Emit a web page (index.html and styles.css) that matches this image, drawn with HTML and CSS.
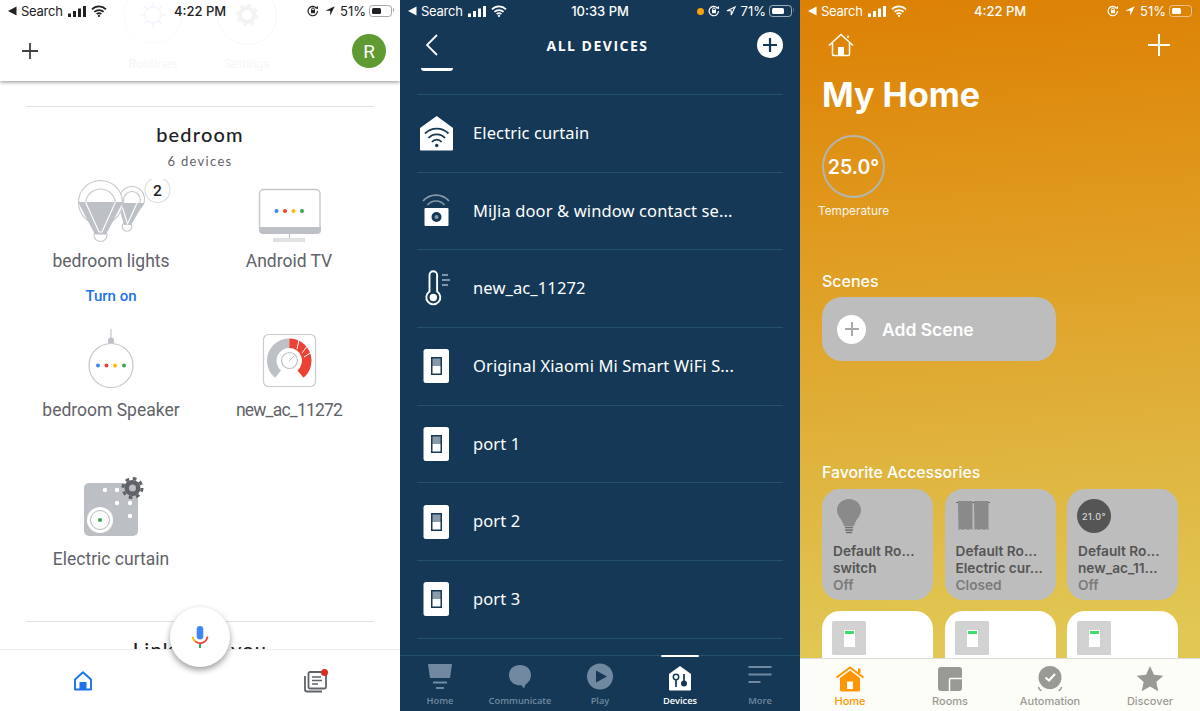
FILE: index.html
```html
<!DOCTYPE html>
<html lang="en">
<head>
    <meta charset="UTF-8">
    <meta name="viewport" content="width=device-width, initial-scale=1.0">
    <title>Smart home apps</title>
    <link rel="stylesheet" href="styles.css">
</head>
<body>
    <!-- shared status bar glyphs -->
    <svg class="sprite" width="0" height="0">
        <symbol id="i-back" viewBox="0 0 9 10"><path d="M0 5 8.500 .5v9z" fill="currentColor"/></symbol>
        <symbol id="i-signal" viewBox="0 0 18 11"><path d="M0 7.500h3V11H0zM5 5h3v6H5zM10 2.500h3V11h-3zM15 0h3v11h-3z" fill="currentColor"/></symbol>
        <symbol id="i-wifi" viewBox="0 0 16 12"><path d="M1 4.300a10 10 0 0 1 14 0M3.400 6.900a6.600 6.600 0 0 1 9.200 0M5.700 9.200a3.300 3.300 0 0 1 4.600 0" fill="none" stroke="currentColor" stroke-width="1.700"/><circle cx="8" cy="10.900" r="1.100" fill="currentColor"/></symbol>
        <symbol id="i-lock" viewBox="0 0 12 12"><path d="M10.500 6a4.700 4.700 0 1 1-1.400-3.300" fill="none" stroke="currentColor" stroke-width="1.200"/><path d="M8 3.200 11 4V1z" fill="currentColor"/><rect x="4" y="5" width="4" height="3.200" fill="currentColor"/><path d="M4.700 5V4.200a1.300 1.300 0 0 1 2.600 0V5" fill="none" stroke="currentColor"/></symbol>
        <symbol id="i-loc" viewBox="0 0 10 10"><path d="M.300 4.800 9.700.300 5.200 9.700V4.800z" fill="currentColor"/></symbol>
        <symbol id="i-loc-line" viewBox="0 0 10 10"><path d="M1 4.800 9 1 5.200 9V4.800z" fill="none" stroke="currentColor" stroke-width="1.100"/></symbol>
        <symbol id="i-switch" viewBox="0 0 40 40"><rect x="6.500" y="3" width="25.500" height="34" rx="2.500" fill="#fff"/><rect x="14" y="11" width="11" height="18" fill="#143855"/><rect x="15.500" y="12.500" width="8" height="7.500" fill="#8a9aa8"/><rect x="15.500" y="20" width="8" height="7.500" fill="#fff"/></symbol>
        <symbol id="i-wall" viewBox="0 0 34 34"><rect width="34" height="34" rx="1.500" fill="#d2d2d2"/><rect x="12" y="9" width="11" height="17" fill="#fff"/><rect x="13" y="10" width="9" height="3" fill="#3fdc6e"/></symbol>
    </svg>

    <div class="screens">
        <!-- Google Home -->
        <section class="phone google">
            <header class="g-top">
                <div class="ghost">
                    <div class="ghost-item">
                        <svg width="60" height="56" viewBox="0 0 60 56"><circle cx="30" cy="14" r="29" fill="none" stroke="#fafafa"/><circle cx="30" cy="15" r="8" fill="none" stroke="#f3f4fc" stroke-width="1.300"/><path d="M30 2v4M30 24v4M17 15h4M39 15h4M21 6l3 3M36 21l3 3M21 24l3-3M36 9l3-3" stroke="#f3f4fc" stroke-width="1.300"/></svg>
                        <span>Routines</span>
                    </div>
                    <div class="ghost-item">
                        <svg width="60" height="56" viewBox="0 0 60 56"><circle cx="30" cy="15" r="29.500" fill="none" stroke="#f7f7f7"/><circle cx="30" cy="15" r="7" fill="none" stroke="#f3f3f3" stroke-width="4"/><circle cx="30" cy="15" r="10" fill="none" stroke="#f3f3f3" stroke-width="2.500" stroke-dasharray="4 3.850"/></svg>
                        <span>Settings</span>
                    </div>
                </div>
                <div class="status">
                    <div class="status-left">
                        <svg class="s-back"><use href="#i-back"/></svg>
                        <span class="s-search">Search</span>
                        <svg class="s-signal"><use href="#i-signal"/></svg>
                        <svg class="s-wifi"><use href="#i-wifi"/></svg>
                    </div>
                    <div class="status-time">4:22 PM</div>
                    <div class="status-right">
                        <svg class="s-lock"><use href="#i-lock"/></svg>
                        <svg class="s-loc"><use href="#i-loc"/></svg>
                        <span>51%</span>
                        <div class="battery"><div class="battery-fill" style="width: 51%"></div></div>
                    </div>
                </div>
                <div class="g-bar">
                    <svg width="16" height="16" viewBox="0 0 16 16"><path d="M8 0v16M0 8h16" stroke="#3c4043" stroke-width="1.800"/></svg>
                    <div class="avatar">R</div>
                </div>
            </header>

            <main class="g-main">
                <hr class="g-rule">
                <h2 class="g-room">bedroom</h2>
                <p class="g-count">6 devices</p>
                <div class="g-grid">
                    <div class="g-cell">
                        <svg class="g-icon" viewBox="22 180 178 64">
                            <circle cx="132" cy="200" r="12.500" fill="#fff" stroke="#c4c7cb" stroke-width="1.100"/>
                            <circle cx="132" cy="201" r="8.500" fill="none" stroke="#c4c7cb" stroke-width="1.100"/>
                            <circle cx="127" cy="227.500" r="4.800" fill="#fff" stroke="#c4c7cb" stroke-width="1.100"/>
                            <path d="M118 204h26l-13 22h-7z" fill="#bdc1c6"/>
                            <path d="M121 204 127.500 225 137 204" fill="none" stroke="#fff" stroke-width="1.100"/>
                            <circle cx="100.500" cy="203.500" r="22" fill="#fff" stroke="#c4c7cb" stroke-width="1.100"/>
                            <circle cx="100.500" cy="205" r="15" fill="none" stroke="#c4c7cb" stroke-width="1.100"/>
                            <circle cx="100.500" cy="236" r="6.500" fill="#fff" stroke="#c4c7cb" stroke-width="1.100"/>
                            <path d="M78 203h45l-17 32.500H95z" fill="#bdc1c6"/>
                            <path d="M85.500 203 99 233h3L115.500 203" fill="none" stroke="#fff" stroke-width="1.100"/>
                            <circle cx="157.500" cy="191" r="12.500" fill="#fff" stroke="#dadce0" stroke-width="1.100"/>
                            <text class="g-badge" x="157.500" y="196.500" text-anchor="middle">2</text>
                        </svg>
                        <div class="g-label">bedroom lights</div>
                        <div class="g-action">Turn on</div>
                    </div>
                    <div class="g-cell">
                        <svg class="g-icon" viewBox="200 180 178 64">
                            <rect x="259.500" y="190.500" width="60.500" height="43.500" rx="4" fill="#fff" stroke="#c4c7cb" stroke-width="1.400"/>
                            <path d="M259 228h62v3a4 4 0 0 1-4 4h-54a4 4 0 0 1-4-4z" fill="#bdc1c6"/>
                            <path d="M289.500 235v5" stroke="#bdc1c6" stroke-width="1.200"/>
                            <rect x="273" y="239" width="32" height="4" fill="#dfe1e3"/>
                            <circle cx="276.500" cy="212" r="2" fill="#4285f4"/>
                            <circle cx="285" cy="212" r="2" fill="#ea4335"/>
                            <circle cx="293.500" cy="212" r="2" fill="#fbbc04"/>
                            <circle cx="302" cy="212" r="2" fill="#34a853"/>
                        </svg>
                        <div class="g-label">Android TV</div>
                    </div>
                    <div class="g-cell">
                        <svg class="g-icon" viewBox="22 329 178 64">
                            <path d="M111 330v11" stroke="#c4c7cb" stroke-width="1.200"/>
                            <path d="M108 345v-3.500a3 3 0 0 1 6 0V345z" fill="#bdc1c6"/>
                            <circle cx="111" cy="366.500" r="22" fill="#fff" stroke="#c4c7cb" stroke-width="1.200"/>
                            <circle cx="98" cy="366.500" r="2" fill="#4285f4"/>
                            <circle cx="106.500" cy="366.500" r="2" fill="#ea4335"/>
                            <circle cx="115" cy="366.500" r="2" fill="#fbbc04"/>
                            <circle cx="124" cy="366.500" r="2" fill="#34a853"/>
                        </svg>
                        <div class="g-label">bedroom Speaker</div>
                    </div>
                    <div class="g-cell">
                        <svg class="g-icon" viewBox="200 329 178 64">
                            <rect x="263.500" y="335.500" width="52" height="52" rx="5" fill="#fff" stroke="#c9cbce" stroke-width="1.200"/>
                            <path d="M278 375.100A17.500 17.500 0 0 1 289.300 344.200" fill="none" stroke="#bdc1c6" stroke-width="9.500"/>
                            <path d="M289.300 344.200A17.500 17.500 0 0 1 300.500 375.100" fill="none" stroke="#ea4335" stroke-width="9.500"/>
                            <path d="M297 350 299 341M302 354 308 346M304 358 312 353" stroke="#fff" stroke-width="1"/>
                            <circle cx="289.500" cy="361.500" r="8" fill="#fff" stroke="#bdc1c6" stroke-width="1.200"/>
                            <path d="M289 362l5-5" stroke="#bdc1c6" stroke-width="1"/>
                        </svg>
                        <div class="g-label g-label-tight">new_ac_11272</div>
                    </div>
                    <div class="g-cell">
                        <svg class="g-icon" viewBox="22 478 178 64">
                            <rect x="84" y="484" width="54" height="53" rx="5" fill="#bcbfc3"/>
                            <g fill="#fff">
                                <circle cx="105" cy="491" r="2.200"/>
                                <circle cx="117" cy="491" r="2.200"/>
                                <circle cx="117" cy="504" r="2.200"/>
                                <circle cx="130" cy="504" r="2.200"/>
                                <circle cx="130" cy="517" r="2.200"/>
                                <circle cx="100" cy="521" r="13"/>
                            </g>
                            <circle cx="100" cy="521" r="9.500" fill="none" stroke="#b5b8bc"/>
                            <circle cx="100" cy="521" r="2" fill="#34a853"/>
                            <circle cx="132.500" cy="489" r="8" fill="#5f6368"/>
                            <circle cx="132.500" cy="489" r="9.500" fill="none" stroke="#5f6368" stroke-width="3" stroke-dasharray="3.700 3.760"/>
                            <circle cx="132.500" cy="489" r="3.500" fill="#bcbfc3"/>
                        </svg>
                        <div class="g-label">Electric curtain</div>
                    </div>
                </div>
                <hr class="g-rule">
                <h2 class="g-linked">Linked to you</h2>
            </main>

            <nav class="g-nav">
                <svg width="18" height="20" viewBox="0 0 18 20"><path d="M1 8.500 9 1.300l8 7.200V18.500H1z" fill="none" stroke="#1a73e8" stroke-width="1.900" stroke-linejoin="round"/><rect x="5.500" y="11" width="7" height="8" fill="#1a73e8"/></svg>
                <svg width="24" height="24" viewBox="0 0 24 24">
                    <path d="M1 7v13.500a2 2 0 0 0 2 2h15" fill="none" stroke="#5f6368" stroke-width="1.800"/>
                    <rect x="4.500" y="3" width="17.500" height="16.500" rx="1.500" fill="none" stroke="#5f6368" stroke-width="1.800"/>
                    <path d="M8 8h9M8 11.500h10M8 15h6" stroke="#5f6368" stroke-width="1.500"/>
                    <circle cx="20.500" cy="3.500" r="3.500" fill="#d93025"/>
                </svg>
            </nav>

            <div class="mic">
                <svg width="18" height="24" viewBox="0 0 18 24">
                    <rect x="5.700" y="1" width="6.600" height="13.500" rx="3.300" fill="#4285f4"/>
                    <path d="M1.500 11.500a7.500 7.500 0 0 0 3 5" fill="none" stroke="#fbbc04" stroke-width="1.800"/>
                    <path d="M4.300 16.400a7.500 7.500 0 0 0 12.200-4.900" fill="none" stroke="#ea4335" stroke-width="1.800"/>
                    <rect x="8" y="19" width="2" height="4" fill="#34a853"/>
                </svg>
            </div>
        </section>

        <!-- Alexa -->
        <section class="phone alexa">
            <div class="status">
                <div class="status-left">
                    <svg class="s-back"><use href="#i-back"/></svg>
                    <span class="s-search">Search</span>
                    <svg class="s-signal"><use href="#i-signal"/></svg>
                    <svg class="s-wifi"><use href="#i-wifi"/></svg>
                </div>
                <div class="status-time">10:33 PM</div>
                <div class="status-right">
                    <span class="dot-orange"></span>
                    <svg class="s-lock"><use href="#i-lock"/></svg>
                    <svg class="s-loc"><use href="#i-loc-line"/></svg>
                    <span>71%</span>
                    <div class="battery"><div class="battery-fill" style="width: 71%"></div></div>
                </div>
            </div>
            <div class="a-head">
                <svg width="13" height="22" viewBox="0 0 13 22"><path d="M12 1 2 11l10 10" fill="none" stroke="#fff" stroke-width="1.800"/></svg>
                <h1 class="a-title">ALL DEVICES</h1>
                <div class="a-add"><svg width="14" height="14" viewBox="0 0 14 14"><path d="M7 0v14M0 7h14" stroke="#143855" stroke-width="2.200"/></svg></div>
            </div>
            <main class="a-list">
                <div class="a-row a-row-cut">
                    <div class="a-cut-bar"></div>
                </div>
                <div class="a-row">
                    <svg class="a-icon" viewBox="0 0 40 40"><path d="M19.700 3 36 15v21.500a1 1 0 0 1-1 1H4a1 1 0 0 1-1-1V15z" fill="#fff"/><path d="M8 20.500a16.500 16.500 0 0 1 23.500 0M11.500 25a11 11 0 0 1 16.500 0M15 29a6 6 0 0 1 9.500 0" fill="none" stroke="#143855" stroke-width="1.800"/><circle cx="19.700" cy="32.500" r="1.700" fill="#143855"/></svg>
                    <span class="a-name">Electric curtain</span>
                </div>
                <div class="a-row">
                    <svg class="a-icon" viewBox="0 0 40 40"><path d="M6 10a17.500 17.500 0 0 1 26 0M10.500 14a11 11 0 0 1 17 0" fill="none" stroke="#8798a8" stroke-width="1.700"/><rect x="7.500" y="17" width="24" height="18" rx="1" fill="#fff"/><circle cx="19.500" cy="26" r="5" fill="#143855"/><circle cx="19.500" cy="26" r="2" fill="#8798a8"/></svg>
                    <span class="a-name">MiJia door &amp; window contact se...</span>
                </div>
                <div class="a-row">
                    <svg class="a-icon" viewBox="0 0 40 40"><path d="M12.500 22.500V6a3.800 3.800 0 0 1 7.600 0v16.500a7 7 0 1 1-7.600 0z" fill="none" stroke="#fff" stroke-width="1.900"/><circle cx="16.300" cy="28.500" r="3.700" fill="#fff"/><path d="M25 6h6M25 11h8M25 16h6" stroke="#a7b4c0" stroke-width="1.500"/></svg>
                    <span class="a-name">new_ac_11272</span>
                </div>
                <div class="a-row">
                    <svg class="a-icon"><use href="#i-switch"/></svg>
                    <span class="a-name">Original Xiaomi Mi Smart WiFi S...</span>
                </div>
                <div class="a-row">
                    <svg class="a-icon"><use href="#i-switch"/></svg>
                    <span class="a-name">port 1</span>
                </div>
                <div class="a-row">
                    <svg class="a-icon"><use href="#i-switch"/></svg>
                    <span class="a-name">port 2</span>
                </div>
                <div class="a-row">
                    <svg class="a-icon"><use href="#i-switch"/></svg>
                    <span class="a-name">port 3</span>
                </div>
            </main>
            <nav class="a-nav">
                <div class="a-tab">
                    <svg width="26" height="28" viewBox="0 0 26 28"><path d="M1 1h24l-2 14H3z" fill="#7089a0"/><path d="M6 19.500h14M9 25h8" stroke="#7089a0" stroke-width="2"/></svg>
                    <span>Home</span>
                </div>
                <div class="a-tab">
                    <svg width="26" height="28" viewBox="0 0 26 28"><path d="M13 2c6.500 0 11 4.200 11 10 0 4.500-2.500 7.500-5.500 9.500L17 25.500l-2.500-3.200C7.500 23 2 18.500 2 12 2 6.200 6.500 2 13 2z" fill="#7089a0"/></svg>
                    <span>Communicate</span>
                </div>
                <div class="a-tab">
                    <svg width="26" height="28" viewBox="0 0 26 28"><circle cx="13" cy="13.500" r="13" fill="#7089a0"/><path d="M9 7.500 20 13.500 9 19.500z" fill="#143855"/></svg>
                    <span>Play</span>
                </div>
                <div class="a-tab a-tab-on">
                    <svg width="26" height="28" viewBox="0 0 26 28"><path d="M13 3 24 11v15.500a1 1 0 0 1-1 1H3a1 1 0 0 1-1-1V11z" fill="#fff"/><circle cx="9" cy="14" r="2.700" fill="none" stroke="#143855" stroke-width="1.500"/><path d="M9 17v7" stroke="#143855" stroke-width="1.700"/><path d="M17 11v7" stroke="#143855" stroke-width="1.700"/><circle cx="17" cy="20.500" r="3" fill="#143855"/></svg>
                    <span>Devices</span>
                </div>
                <div class="a-tab">
                    <svg width="26" height="28" viewBox="0 0 26 28"><path d="M1.500 4h23M1.500 11.500h23M1.500 19h12" stroke="#7089a0" stroke-width="2"/></svg>
                    <span>More</span>
                </div>
            </nav>
        </section>

        <!-- Apple Home -->
        <section class="phone apple">
            <div class="status">
                <div class="status-left">
                    <svg class="s-back"><use href="#i-back"/></svg>
                    <span class="s-search">Search</span>
                    <svg class="s-signal"><use href="#i-signal"/></svg>
                    <svg class="s-wifi"><use href="#i-wifi"/></svg>
                </div>
                <div class="status-time">4:22 PM</div>
                <div class="status-right">
                    <svg class="s-lock"><use href="#i-lock"/></svg>
                    <svg class="s-loc"><use href="#i-loc"/></svg>
                    <span>51%</span>
                    <div class="battery"><div class="battery-fill" style="width: 51%"></div></div>
                </div>
            </div>
            <main class="h-main">
                <div class="h-tools">
                    <svg width="26" height="24" viewBox="0 0 26 24"><path d="M1 12.500 13 1.500l12 11M4.500 10v11.500a1 1 0 0 0 1 1h15a1 1 0 0 0 1-1V10M20 5V2.500" fill="none" stroke="#fff" stroke-width="1.500"/><rect x="10" y="14" width="6" height="8.500" fill="#fff"/></svg>
                    <svg width="24" height="24" viewBox="0 0 24 24"><path d="M12 1v22M1 12h22" stroke="#fff" stroke-width="2"/></svg>
                </div>
                <h1 class="h-title">My Home</h1>
                <div class="h-sensor">
                    <div class="h-ring">25.0°</div>
                    <div class="h-sensor-name">Temperature</div>
                </div>
                <h2 class="h-sub h-sub-scenes">Scenes</h2>
                <div class="h-scene">
                    <div class="h-scene-add"><svg width="14" height="14" viewBox="0 0 14 14"><path d="M7 0v14M0 7h14" stroke="#a9a9a9" stroke-width="2"/></svg></div>
                    <span>Add Scene</span>
                </div>
                <h2 class="h-sub h-sub-fav">Favorite Accessories</h2>
                <div class="h-tiles">
                    <div class="h-tile">
                        <svg class="h-tile-icon" width="40" height="36" viewBox="0 0 40 36"><path d="M16 0C9 0 4 5 4 11c0 5.500 4 8.500 6 13 .4 1 .7 2 .8 3h10.400c.1-1 .4-2 .8-3 2-4.500 6-7.500 6-13C28 5 23 0 16 0z" fill="#8a8a8a"/><path d="M12 28.500h8M12 31h8M13 33.500h6" stroke="#6f6f6f" stroke-width="1.300"/></svg>
                        <p>Default Ro...</p><p>switch</p><p class="h-state">Off</p>
                    </div>
                    <div class="h-tile">
                        <svg class="h-tile-icon" width="40" height="36" viewBox="0 0 40 36"><path d="M0 3.500h34" stroke="#666" stroke-width="1"/><path d="M2 2h14.500v29l-2-1-2.500 1-2.500-1-2.500 1-2.500-1-2 1z" fill="#8a8a8a"/><path d="M18 2h14.500v29l-2-1-2.500 1-2.500-1-2.500 1-2.500-1-2 1z" fill="#8a8a8a"/></svg>
                        <p>Default Ro...</p><p>Electric cur...</p><p class="h-state">Closed</p>
                    </div>
                    <div class="h-tile">
                        <div class="h-dial">21.0°</div>
                        <p>Default Ro...</p><p>new_ac_11...</p><p class="h-state">Off</p>
                    </div>
                    <div class="h-tile h-tile-on"><svg class="h-wall"><use href="#i-wall"/></svg></div>
                    <div class="h-tile h-tile-on"><svg class="h-wall"><use href="#i-wall"/></svg></div>
                    <div class="h-tile h-tile-on"><svg class="h-wall"><use href="#i-wall"/></svg></div>
                </div>
            </main>
            <nav class="h-nav">
                <div class="h-tab h-tab-on">
                    <svg width="30" height="26" viewBox="0 0 30 26"><path d="M1.500 11.500 15 1.500l13.500 10" fill="none" stroke="#ff9500" stroke-width="2"/><path d="M23 2.500h2.500V7H23z" fill="#ff9500"/><path d="M5 12 15 4.500 25 12v12a1.500 1.500 0 0 1-1.500 1.500h-17A1.500 1.500 0 0 1 5 24z" fill="#ff9500"/><rect x="12" y="15.500" width="6" height="7.500" fill="#fff"/></svg>
                    <span>Home</span>
                </div>
                <div class="h-tab">
                    <svg width="30" height="26" viewBox="0 0 30 26"><rect x="3" y="1" width="24" height="24" rx="3" fill="#999a94"/><path d="M27 12.500H15.500a1 1 0 0 0-1 1V25" fill="none" stroke="#fdfdf8" stroke-width="1.500"/></svg>
                    <span>Rooms</span>
                </div>
                <div class="h-tab">
                    <svg width="30" height="26" viewBox="0 0 30 26"><circle cx="15" cy="11.500" r="11.500" fill="#999a94"/><path d="M10.500 11.500l3.500 3 6-6.500" fill="none" stroke="#fff" stroke-width="2"/><path d="M3.500 21c.3 2 1.300 3.200 3 3.500M26.500 21c-.3 2-1.300 3.200-3 3.500" fill="none" stroke="#999a94" stroke-width="1.500"/></svg>
                    <span>Automation</span>
                </div>
                <div class="h-tab">
                    <svg width="30" height="26" viewBox="0 0 30 26"><path d="M15 0l4 8.700 9.300 1-7 6.300 2 9.300-8.300-4.800-8.300 4.800 2-9.300-7-6.300 9.300-1z" fill="#999a94"/></svg>
                    <span>Discover</span>
                </div>
            </nav>
        </section>
    </div>
</body>
</html>
```

FILE: styles.css
```css
/* three phone screens side by side */
body {
    margin: 0;
    font-family: "Liberation Sans", Arial, sans-serif;
    background-color: #fff;
}
h1, h2, p, hr {
    margin: 0;
}
.sprite {
    display: block;
    height: 0;
}
.screens {
    display: flex;
    width: 1200px;
    height: 711px;
    overflow: hidden;
}
.phone {
    position: relative;
    display: flex;
    flex-direction: column;
    width: 400px;
    height: 711px;
    overflow: hidden;
}

/* status bar */
.status {
    position: relative;
    display: flex;
    align-items: center;
    flex: none;
    height: 22px;
    font-family: Inter, "Liberation Sans", sans-serif;
    font-size: 13px;
    line-height: 22px;
}
.status-left, .status-right {
    display: flex;
    flex: 1;
    align-items: center;
}
.status-left {
    padding-left: 8px;
}
.status-right {
    justify-content: flex-end;
    padding-right: 8px;
}
.status-time {
    font-weight: 500;
}
.s-search {
    letter-spacing: -0.250px;
}
.s-back {
    width: 9px;
    height: 10px;
    margin-right: 4px;
}
.s-signal {
    width: 18px;
    height: 11px;
    margin-left: 5px;
}
.s-wifi {
    width: 16px;
    height: 12px;
    margin-left: 5px;
}
.s-lock {
    width: 12px;
    height: 12px;
    margin-right: 6px;
}
.s-loc {
    width: 10px;
    height: 10px;
    margin-right: 5px;
}
.dot-orange {
    width: 7px;
    height: 7px;
    margin-right: 4px;
    border-radius: 50%;
    background-color: #ff9f0a;
}
.battery {
    position: relative;
    box-sizing: border-box;
    width: 23px;
    height: 12px;
    margin-left: 3px;
    padding: 2px;
    border: 1px solid rgba(128, 128, 128, 0.7);
    border-radius: 3.500px;
}
.battery::after {
    content: "";
    position: absolute;
    top: 2px;
    right: -3px;
    width: 1.500px;
    height: 4px;
    border-radius: 0 1px 1px 0;
    background-color: rgba(128, 128, 128, 0.7);
}
.alexa .battery {
    border-color: rgba(255, 255, 255, 0.6);
}
.apple .battery {
    border-color: rgba(255, 255, 255, 0.5);
}
.battery-fill {
    height: 100%;
    border-radius: 1.500px;
    background-color: currentColor;
}

/* google home */
.google {
    color: #202124;
    background-color: #fff;
}
.g-top {
    position: relative;
    z-index: 2;
    flex: none;
    height: 81px;
    background-color: #fff;
    box-shadow: 0 1px 4px rgba(0, 0, 0, 0.45);
}
.ghost {
    position: absolute;
    top: 0;
    left: 0;
    right: 0;
    display: flex;
    justify-content: center;
}
.ghost-item {
    display: flex;
    flex-direction: column;
    align-items: center;
    width: 94px;
    height: 72px;
    overflow: hidden;
    color: #f6f7f8;
    font-family: Roboto, sans-serif;
    font-size: 12.500px;
}
.ghost-item svg {
    flex: none;
}
.g-bar {
    position: relative;
    display: flex;
    align-items: center;
    justify-content: space-between;
    height: 58px;
    padding: 0 14px 0 22px;
}
.avatar {
    display: flex;
    align-items: center;
    justify-content: center;
    width: 34px;
    height: 34px;
    border-radius: 50%;
    color: #fff;
    font-family: Roboto, sans-serif;
    font-size: 19px;
    background-color: #5f9a33;
}
.g-main {
    flex: 1;
    padding-top: 25px;
    overflow: hidden;
}
.g-rule {
    height: 1px;
    margin: 0 26px;
    border: 0;
    background-color: #dfe1e3;
}
.g-room, .g-linked {
    height: 24px;
    color: #202124;
    font-family: Lato, sans-serif;
    font-size: 20px;
    font-weight: 500;
    line-height: 24px;
    letter-spacing: 1.200px;
    text-align: center;
}
.g-room {
    margin-top: 15px;
}
.g-linked {
    margin-top: 15px;
}
.g-count {
    margin-top: 7px;
    color: #5f6368;
    font-family: Lato, sans-serif;
    font-size: 13px;
    line-height: 16px;
    letter-spacing: 1.300px;
    text-align: center;
}
.g-grid {
    display: grid;
    grid-template-columns: 178px 178px;
    grid-template-rows: 149px 149px auto;
    margin: 10px 0 50px 22px;
}
.g-icon {
    display: block;
    width: 178px;
    height: 64px;
}
.g-badge {
    fill: #202124;
    font-family: Roboto, sans-serif;
    font-size: 15.500px;
    font-weight: 500;
}
.g-label {
    margin-top: 6px;
    color: #5f6368;
    font-family: Roboto, sans-serif;
    font-size: 17.500px;
    line-height: 24px;
    text-align: center;
}
.g-label-tight {
    letter-spacing: -0.800px;
}
.g-action {
    margin-top: 13px;
    color: #1a73e8;
    font-family: Roboto, sans-serif;
    font-size: 15px;
    font-weight: 500;
    line-height: 20px;
    text-align: center;
}
.g-nav {
    position: relative;
    z-index: 1;
    display: flex;
    flex: none;
    align-items: center;
    justify-content: space-between;
    height: 61px;
    padding: 0 72px 0 74px;
    border-top: 1px solid #eeeeee;
    background-color: #fff;
}
.mic {
    position: absolute;
    z-index: 3;
    top: 607px;
    left: 170px;
    display: flex;
    align-items: center;
    justify-content: center;
    width: 60px;
    height: 60px;
    border-radius: 50%;
    background-color: #fff;
    box-shadow: 0 3px 6px rgba(0, 0, 0, 0.4);
}

/* alexa */
.alexa {
    color: #fff;
    background-color: #143855;
}
.a-head {
    display: flex;
    align-items: center;
    justify-content: space-between;
    flex: none;
    height: 46px;
    padding: 0 17px 0 25px;
}
.a-title {
    font-family: "Open Sans", sans-serif;
    font-size: 14px;
    font-weight: 700;
    letter-spacing: 1.500px;
}
.a-add {
    display: flex;
    align-items: center;
    justify-content: center;
    width: 26px;
    height: 26px;
    border-radius: 50%;
    background-color: #fff;
}
.a-list {
    flex: 1;
    padding: 0 17px;
    overflow: hidden;
}
.a-row {
    display: flex;
    align-items: center;
    box-sizing: border-box;
    height: 77.700px;
    border-bottom: 1px solid #24506f;
}
.a-row-cut {
    align-items: flex-start;
    height: 27px;
}
.a-cut-bar {
    width: 32px;
    height: 3px;
    margin-left: 3.500px;
    border-radius: 0 0 3px 3px;
    background-color: #fff;
}
.a-icon {
    flex: none;
    width: 40px;
    height: 40px;
    margin-right: 16px;
}
.a-name {
    margin-bottom: 2px;
    font-family: "Noto Sans", sans-serif;
    font-size: 16.500px;
    letter-spacing: 0.120px;
    white-space: nowrap;
}
.a-nav {
    display: flex;
    flex: none;
    height: 55px;
    border-top: 1px solid #24506f;
    background-color: #143855;
}
.a-tab {
    position: relative;
    display: flex;
    flex: 1;
    flex-direction: column;
    align-items: center;
    padding-top: 7px;
    color: #7089a0;
    font-family: "Open Sans", sans-serif;
    font-size: 9.300px;
    font-weight: 600;
}
.a-tab span {
    margin-top: 3px;
    line-height: 14px;
}
.a-tab-on {
    color: #fff;
}
.a-tab-on::before {
    content: "";
    position: absolute;
    top: -1px;
    width: 38px;
    height: 2px;
    border-radius: 1px;
    background-color: #fff;
}

/* apple home */
.apple {
    color: #fff;
    background: linear-gradient(176deg, #dc8003 0, #e09b20 240px, #dfb540 480px, #e1c854 660px);
}
.h-main {
    flex: 1;
    padding: 0 22px;
    overflow: hidden;
    font-family: Inter, "Liberation Sans", sans-serif;
}
.h-tools {
    display: flex;
    align-items: center;
    justify-content: space-between;
    height: 46px;
    padding: 0 7px 0 6px;
}
.h-title {
    margin-top: 4px;
    font-size: 34px;
    font-weight: 700;
    line-height: 46px;
}
.h-sensor {
    display: flex;
    flex-direction: column;
    align-items: center;
    width: 63px;
    margin-top: 17px;
}
.h-ring {
    display: flex;
    align-items: center;
    justify-content: center;
    box-sizing: border-box;
    width: 63px;
    height: 63px;
    border: 2px solid #b4b5ad;
    border-radius: 50%;
    font-size: 19.500px;
    font-weight: 600;
}
.h-sensor-name {
    margin-top: 6px;
    font-size: 11.800px;
    line-height: 14px;
    white-space: nowrap;
    opacity: 0.9;
}
.h-sub {
    font-size: 16px;
    font-weight: 500;
    line-height: 20px;
}
.h-sub-scenes {
    margin-top: 53px;
}
.h-sub-fav {
    margin-top: 102px;
    font-size: 15.800px;
}
.h-scene {
    display: flex;
    align-items: center;
    width: 234px;
    height: 64px;
    margin-top: 6px;
    border-radius: 20px;
    background-color: #bdbdbd;
    font-size: 17.500px;
    font-weight: 600;
}
.h-scene-add {
    display: flex;
    align-items: center;
    justify-content: center;
    width: 29px;
    height: 29px;
    margin: 0 16px 0 15px;
    border-radius: 50%;
    background-color: #fff;
}
.h-tiles {
    display: grid;
    grid-template-columns: repeat(3, 111px);
    grid-auto-rows: 111px;
    gap: 11px 11.500px;
    margin-top: 6px;
}
.h-tile {
    box-sizing: border-box;
    padding: 10px 11px;
    border-radius: 18px;
    background-color: #bdbdbd;
    color: #555;
    font-size: 13.700px;
    font-weight: 600;
    line-height: 17px;
    white-space: nowrap;
}
.h-tile-icon {
    display: block;
    height: 36px;
    margin-bottom: 8px;
}
.h-state {
    color: #7b7b7b;
}
.h-dial {
    display: flex;
    align-items: center;
    justify-content: center;
    width: 34px;
    height: 34px;
    margin-bottom: 10px;
    margin-left: -1px;
    border-radius: 50%;
    background-color: #555;
    color: #d6d6d6;
    font-size: 9px;
    font-weight: 500;
    letter-spacing: 0.500px;
}
.h-tile-on {
    background-color: #fff;
}
.h-wall {
    display: block;
    width: 34px;
    height: 34px;
    margin-left: -1px;
}
.h-nav {
    display: flex;
    flex: none;
    height: 52px;
    border-top: 1px solid #dcdcd8;
    background-color: #fdfdf8;
}
.h-tab {
    display: flex;
    flex: 1;
    flex-direction: column;
    align-items: center;
    padding-top: 7px;
    color: #999a94;
    font-family: Inter, "Liberation Sans", sans-serif;
    font-size: 11px;
    font-weight: 500;
}
.h-tab span {
    margin-top: 2px;
    line-height: 14px;
}
.h-tab-on {
    color: #ff9500;
}
```
